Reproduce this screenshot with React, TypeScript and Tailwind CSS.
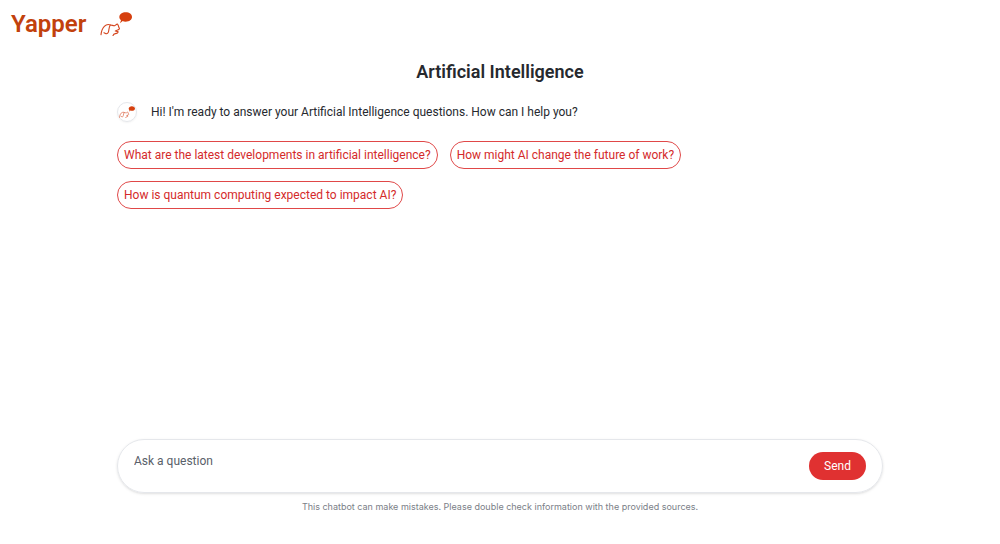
import { useState } from "react";

const questions = [
  "What are the latest developments in artificial intelligence?",
  "How might AI change the future of work?",
  "How is quantum computing expected to impact AI?",
];

function DogLogo({ className }: { className: string }) {
  return (
    <svg viewBox="18 14 96 72" className={className} fill="none" aria-hidden="true">
      <g stroke="#d4461f" strokeWidth="3.4" strokeLinecap="round" strokeLinejoin="round">
        <path d="M21 82C22 72 25 63 31 57C36 52 43 50 49 53C45 58 45 65 44 71C43 77 40 80 36 79L30 76" />
        <path d="M49 53C54 53 58 56 62 55C66 53 68 49 71 51C74 54 73 58 75 61C78 64 75 67 69 69L64 71L72 73C73 76 69 78 64 79C60 80 58 82 57 85" />
      </g>
      <path d="M95 15C106 15 114 21 114 29C114 37 106 43 95 43C91 43 88 42 86 41L78 48L81 39C78 36 76 33 76 29C76 21 85 15 95 15Z" fill="#d6400f" />
    </svg>
  );
}

export default function App() {
  const [text, setText] = useState("");
  return (
    <div className="flex min-h-screen flex-col bg-white font-['Roboto',sans-serif] text-[#26292e]">
      <header className="flex items-center gap-3.5 px-[11px] pt-2">
        <span className="text-2xl font-semibold text-[#c2410c]">Yapper</span>
        <DogLogo className="h-6 w-8" />
      </header>
      <main className="mx-auto flex w-full max-w-[766px] flex-1 flex-col">
        <h1 className="mt-4 text-center text-lg leading-8 font-semibold">
          Artificial Intelligence
        </h1>
        <div className="mt-3.5 flex items-center gap-3.5 text-xs">
          <span className="flex size-5 items-center justify-center rounded-full border border-gray-200 shadow-xs">
            <DogLogo className="h-3 w-4" />
          </span>
          <p>Hi! I'm ready to answer your Artificial Intelligence questions. How can I help you?</p>
        </div>
        <div className="mt-[19px] flex flex-wrap gap-3">
          {questions.map((q) => (
            <button
              key={q}
              type="button"
              onClick={() => setText(q)}
              className="h-7 rounded-full border border-[#e04848] px-1.5 text-xs text-[#d42a2a]"
            >
              {q}
            </button>
          ))}
        </div>
        <form
          onSubmit={(e) => e.preventDefault()}
          className="mt-auto flex items-center rounded-[27px] border border-gray-200 px-4 shadow-sm"
        >
          <textarea
            aria-label="Ask a question"
            placeholder="Ask a question"
            value={text}
            onChange={(e) => setText(e.target.value)}
            className="h-[52px] flex-1 resize-none pt-3 text-xs leading-[18px] outline-none placeholder:text-[#596069]"
          />
          <button
            type="submit"
            className="h-7 rounded-full bg-[#e03131] px-[15px] text-xs text-white"
          >
            Send
          </button>
        </form>
        <p className="mt-1.5 mb-[29px] text-center font-['Inter',sans-serif] text-[9px] leading-4 text-[#7b8087]">
          This chatbot can make mistakes. Please double check information with the provided sources.
        </p>
      </main>
    </div>
  );
}
